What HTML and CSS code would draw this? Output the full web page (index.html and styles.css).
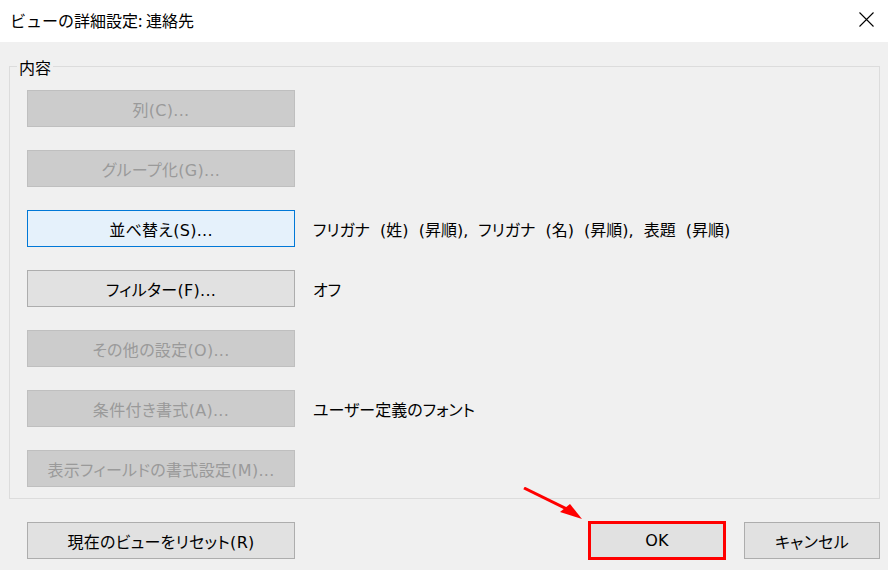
FILE: index.html
```html
<!DOCTYPE html>
<html lang="ja">
<head>
<meta charset="utf-8">
<title>ビューの詳細設定: 連絡先</title>
<link rel="stylesheet" href="styles.css">
</head>
<body>
<div class="dialog">
  <header class="titlebar">
    <span class="title">ビューの詳細設定: 連絡先</span>
    <svg class="close" width="15" height="15" viewBox="0 0 15 15"><path d="M0.5 0.5 L14.5 14.5 M14.5 0.5 L0.5 14.5" stroke="#000" stroke-width="1.1" fill="none"/></svg>
  </header>
  <main class="body">
    <section class="group">
      <div class="group-label">内容</div>
      <div class="rows">
        <div class="row"><button class="btn disabled">列(C)...</button></div>
        <div class="row"><button class="btn disabled">グループ化(G)...</button></div>
        <div class="row"><button class="btn focused">並べ替え(S)...</button><span class="desc">フリガナ (姓) (昇順), フリガナ (名) (昇順), 表題 (昇順)</span></div>
        <div class="row"><button class="btn">フィルター(F)...</button><span class="desc">オフ</span></div>
        <div class="row"><button class="btn disabled">その他の設定(O)...</button></div>
        <div class="row"><button class="btn disabled">条件付き書式(A)...</button><span class="desc">ユーザー定義のフォント</span></div>
        <div class="row"><button class="btn disabled">表示フィールドの書式設定(M)...</button></div>
      </div>
    </section>
    <footer class="footer">
      <button class="btn">現在のビューをリセット(R)</button>
      <div class="actions">
        <button class="btn small highlight">OK</button>
        <button class="btn small">キャンセル</button>
      </div>
    </footer>
  </main>
  <svg class="arrow" width="70" height="40" viewBox="0 0 70 40">
    <path d="M1 1 L50 25" stroke="#f00" stroke-width="3" fill="none"/>
    <path d="M59 32 L37 25 L47 17 Z" fill="#f00"/>
  </svg>
</div>
</body>
</html>
```
FILE: styles.css
```css
* { box-sizing: border-box; }
html, body { margin: 0; padding: 0; }
body {
  background: #f0f0f0;
  font-family: "Noto Sans CJK JP", "Noto Sans", sans-serif;
  font-size: 16px;
  color: #000;
}
.dialog {
  position: relative;
  width: 888px;
  height: 570px;
  background: #f0f0f0;
  overflow: hidden;
}
.titlebar {
  height: 42px;
  background: #fff;
  display: flex;
  align-items: center;
  justify-content: space-between;
  padding: 0 14px 0 10px;
}
.title { font-size: 16px; line-height: 20px; margin-top: -2px; }
.close { display: block; margin-top: -3px; }
.body { padding: 24px 8px 0 9px; }
.group {
  border: 1px solid #dcdcdc;
  padding: 0 0 11px 17px;
}
.group-label {
  width: fit-content;
  margin: -12px 0 0 -10px;
  padding: 0 2px;
  background: #f0f0f0;
  line-height: 24px;
  font-size: 16px;
}
.rows {
  margin-top: 11px;
  display: flex;
  flex-direction: column;
  gap: 23px;
}
.row {
  display: flex;
  align-items: center;
  gap: 18px;
}
.btn {
  width: 268px;
  height: 37px;
  margin: 0;
  padding: 0;
  font-family: "DejaVu Sans", "Noto Sans CJK JP", sans-serif;
  font-size: 16px;
  letter-spacing: 0.3px;
  color: #000;
  background: #e1e1e1;
  border: 1px solid #adadad;
  border-radius: 0;
  font-feature-settings: "palt";
}
.btn.disabled {
  background: #cccccc;
  border-color: #bfbfbf;
  color: #9a9a9a;
}
.btn.focused {
  background: #e5f1fb;
  border-color: #0078d7;
}
.desc {
  font-family: "DejaVu Sans", "Noto Sans CJK JP", sans-serif;
  font-size: 16px;
  font-feature-settings: "palt";
  word-spacing: 5px;
  white-space: nowrap;
}
.footer {
  margin-top: 23px;
  padding-left: 18px;
  display: flex;
  justify-content: space-between;
  align-items: center;
}
.actions { display: flex; gap: 19px; }
.btn.small { width: 136px; }
.btn.highlight {
  outline: 3px solid #f00;
  outline-offset: -2px;
}
.arrow {
  position: absolute;
  left: 523px;
  top: 487px;
}
```
